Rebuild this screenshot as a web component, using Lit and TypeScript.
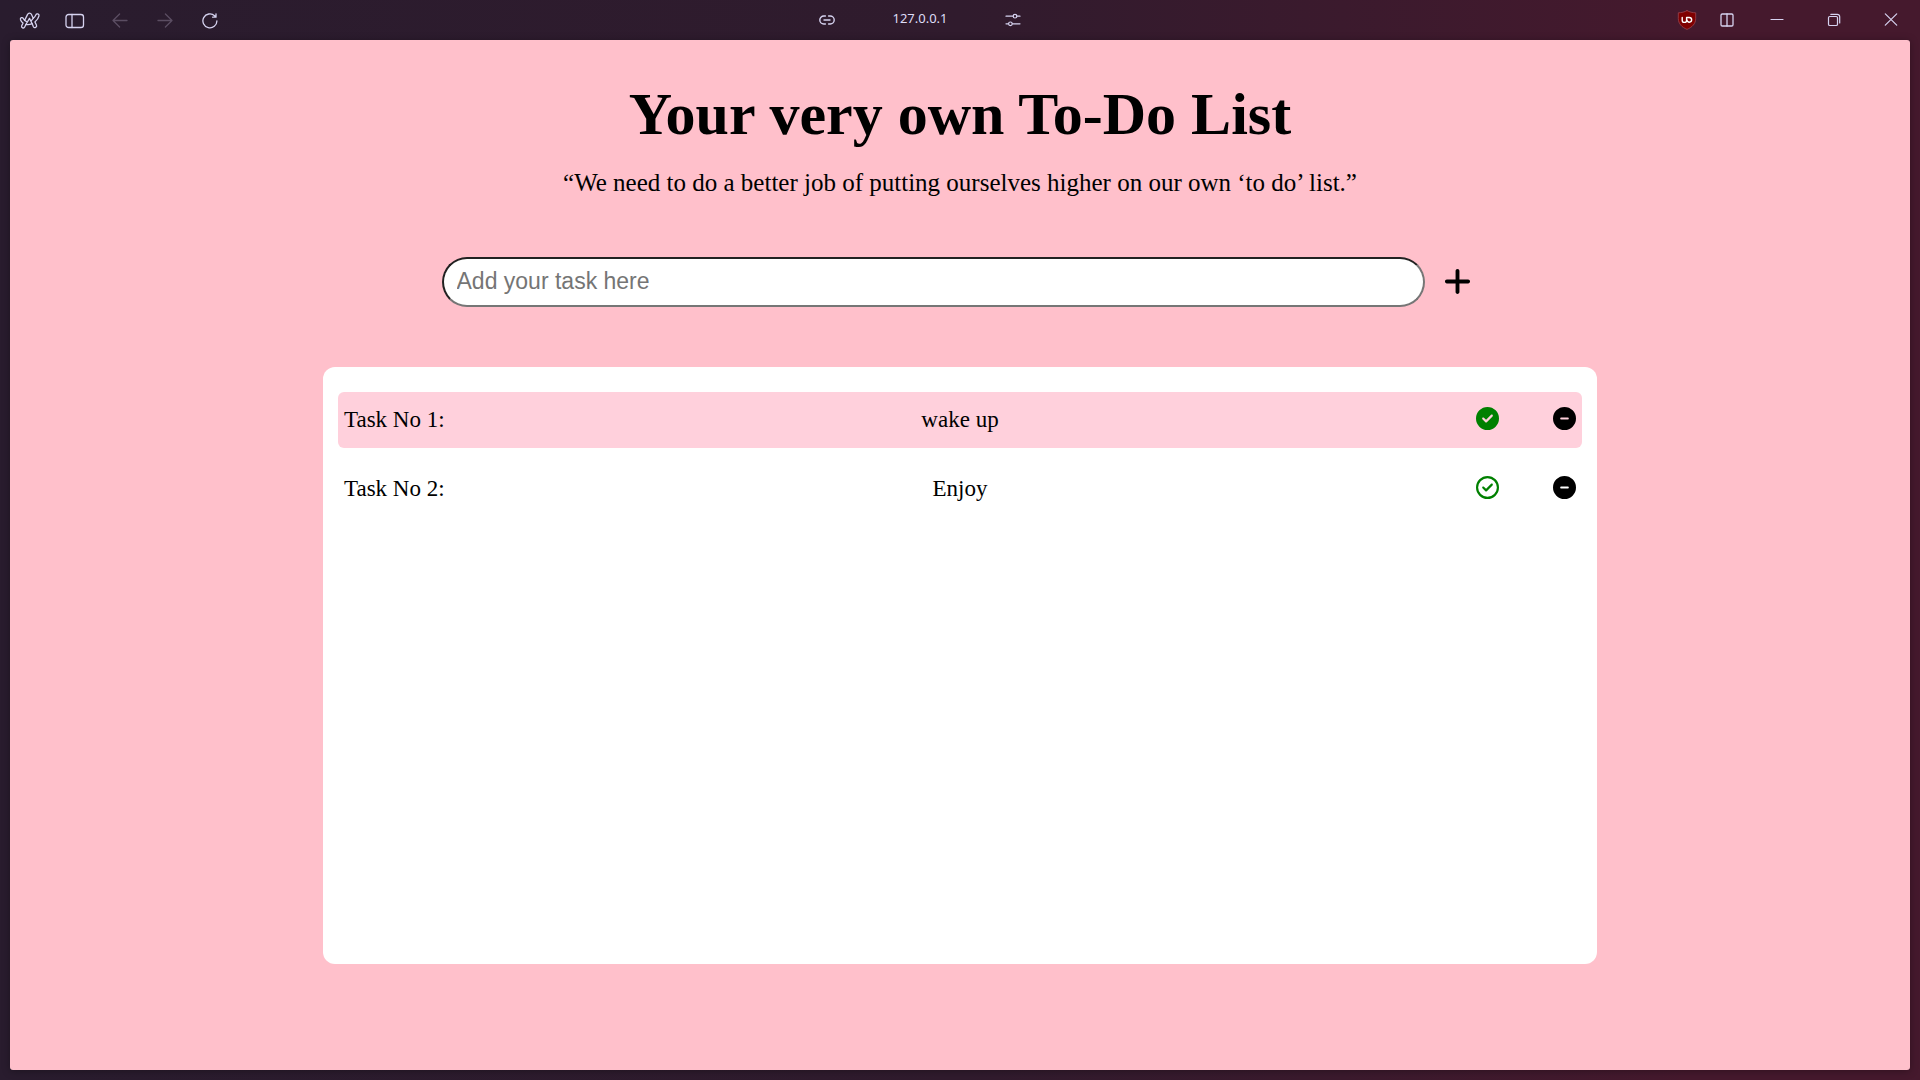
import { LitElement, html, css, svg } from "lit";
import { customElement, state } from "lit/decorators.js";
import { classMap } from "lit/directives/class-map.js";

interface Task {
  name: string;
  done: boolean;
}

const PLUS =
  "M256 80c0-17.7-14.3-32-32-32s-32 14.3-32 32V224H48c-17.7 0-32 14.3-32 32s14.3 32 32 32H192V432c0 17.7 14.3 32 32 32s32-14.3 32-32V288H400c17.7 0 32-14.3 32-32s-14.3-32-32-32H256V80z";
const CHECK_SOLID =
  "M256 512A256 256 0 1 0 256 0a256 256 0 1 0 0 512zM369 209L241 337c-9.4 9.4-24.6 9.4-33.9 0l-64-64c-9.4-9.4-9.4-24.6 0-33.9s24.6-9.4 33.9 0l47 47L335 175c9.4-9.4 24.6-9.4 33.9 0s9.4 24.6 0 33.9z";
const CHECK_OUTLINE =
  "M256 48a208 208 0 1 1 0 416 208 208 0 1 1 0-416zm0 464A256 256 0 1 0 256 0a256 256 0 1 0 0 512zM369 209c9.4-9.4 9.4-24.6 0-33.9s-24.6-9.4-33.9 0l-111 111-47-47c-9.4-9.4-24.6-9.4-33.9 0s-9.4 24.6 0 33.9l64 64c9.4 9.4 24.6 9.4 33.9 0L369 209z";
const MINUS =
  "M256 512A256 256 0 1 0 256 0a256 256 0 1 0 0 512zM184 232H328c13.3 0 24 10.7 24 24s-10.7 24-24 24H184c-13.3 0-24-10.7-24-24s10.7-24 24-24z";

@customElement("browser-bar")
export class BrowserBar extends LitElement {
  static styles = css`
    :host {
      display: block;
      color: #d6d3f0;
      font-family: "Noto Sans", "Open Sans", sans-serif;
    }
    * {
      box-sizing: border-box;
    }
    .bar {
      display: grid;
      grid-template-columns: 1fr auto 1fr;
      height: 40px;
    }
    .group {
      display: flex;
      align-items: center;
    }
    .nav {
      padding-left: 7px;
    }
    .address {
      margin-right: 80px;
      gap: 54px;
    }
    .window {
      justify-content: flex-end;
      padding-right: 1px;
    }
    button {
      display: flex;
      align-items: center;
      justify-content: center;
      padding: 0;
      border: 0;
      background: none;
      color: inherit;
      height: 40px;
    }
    .nav button {
      width: 45px;
      padding-top: 2px;
    }
    .nav button:disabled {
      color: #5b4d62;
    }
    .address button {
      width: 22px;
    }
    .window .extension {
      width: 38px;
    }
    .window .split {
      width: 42px;
    }
    .window .control {
      width: 57px;
    }
    .host {
      font-size: 13px;
      line-height: 36px;
      height: 40px;
      color: #dedcf6;
    }
    svg {
      display: block;
      fill: none;
      stroke: currentColor;
      stroke-linecap: round;
      stroke-linejoin: round;
    }
  `;

  render() {
    return html`
      <header class="bar">
        <nav class="group nav" aria-label="Navigation">
          <button aria-label="Menu">
            <svg width="22" height="20" viewBox="0 0 22 20" stroke="#e4e0e8" stroke-width="1.3">
              <path
                d="M8.6 3.4C9.3 1.6 11.6 1.6 12.4 3.3L14.2 7.3C15.6 6.2 16.4 5 16.8 3.9C17.6 2.1 20.4 2.9 20 4.9C19.5 7.2 17.9 9.3 15.9 10.9L17.5 14.2C18.3 16.2 15.4 17.6 14.4 15.7L13.2 12.7C10.9 13.7 8.8 13.9 6.9 13.5L5.7 16C4.8 17.9 1.9 16.7 2.7 14.7L4 12.1C2.9 11.2 2 10 1.5 8.7C.9 6.7 3.5 5.8 4.3 7.5C4.6 8.2 5.1 8.9 5.6 9.4Z"
              />
              <path d="M5.6 9.4L7.8 10.7M14.2 7.3L12.4 9.6M6.9 13.5L10.5 7.4L13.2 12.7" />
            </svg>
          </button>
          <button aria-label="Toggle sidebar">
            <svg width="20" height="16" viewBox="0 0 20 16" stroke-width="1.3">
              <rect x="1" y="1.5" width="17.5" height="13" rx="2.6" />
              <path d="M7 1.5v13" />
            </svg>
          </button>
          <button aria-label="Back" disabled>
            <svg width="16" height="16" viewBox="0 0 16 16" stroke-width="1.3">
              <path d="M15 7.5H1M7.6 1L1 7.5L7.6 14" />
            </svg>
          </button>
          <button aria-label="Forward" disabled>
            <svg width="16" height="16" viewBox="0 0 16 16" stroke-width="1.3">
              <path d="M1 7.5H15M8.4 1L15 7.5L8.4 14" />
            </svg>
          </button>
          <button aria-label="Reload">
            <svg width="16" height="16" viewBox="0 0 16 16" stroke-width="1.3">
              <path d="M14.9 7.8A7 7 0 1 1 12.6 2.7L13.8 4M14 .8V4.2H10.6" />
            </svg>
          </button>
        </nav>
        <div class="group address">
          <button aria-label="Copy link">
            <svg width="16" height="10" viewBox="0 0 16 10" stroke-width="1.4">
              <path d="M6.4 1H4.8a4 4 0 0 0 0 8h1.6M9.6 1h1.6a4 4 0 0 1 0 8H9.6M5 5h6" />
            </svg>
          </button>
          <span class="host">127.0.0.1</span>
          <button aria-label="Site settings">
            <svg width="16" height="14" viewBox="0 0 16 14" stroke-width="1.2">
              <path d="M1 3.2H8M12 3.2H15M1 10.8H3.4M7.4 10.8H15" />
              <circle cx="10" cy="3.2" r="1.8" />
              <circle cx="5.4" cy="10.8" r="1.8" />
            </svg>
          </button>
        </div>
        <div class="group window">
          <button class="extension" aria-label="uBlock">
            <svg width="20" height="20" viewBox="0 0 20 20">
              <path
                d="M10 .6C7.5 2.1 4.5 2.7 1.3 2.8V8.5C1.3 13.8 5 17.3 10 19.4C15 17.3 18.7 13.8 18.7 8.5V2.8C15.5 2.7 12.5 2.1 10 .6Z"
                fill="#800000"
                stroke="#9a4550"
                stroke-width=".8"
              />
              <path
                d="M5.2 7.4V10.2a2.2 2.2 0 0 0 4.4 0V7.4M9.6 10.2V7.5h2.7a2.3 2.3 0 0 1 0 4.7a2.3 2.3 0 0 1-2.3-2.3"
                stroke="#fff"
                stroke-width="1.4"
              />
            </svg>
          </button>
          <button class="split" aria-label="Split view">
            <svg width="14" height="14" viewBox="0 0 14 14" stroke="#f2eef6" stroke-width="1.3">
              <rect x="1" y="1" width="12" height="12" rx="1.3" />
              <path d="M7 1v12" />
            </svg>
          </button>
          <button class="control" aria-label="Minimize">
            <svg width="14" height="14" viewBox="0 0 14 14" stroke-width="1.2"><path d="M1 6.5h12" /></svg>
          </button>
          <button class="control" aria-label="Restore">
            <svg width="14" height="14" viewBox="0 0 14 14" stroke-width="1.2">
              <rect x="1.5" y="3.5" width="9" height="9" rx="1.3" />
              <path d="M3.8 1.3H10.3a2.4 2.4 0 0 1 2.4 2.4V10" />
            </svg>
          </button>
          <button class="control" aria-label="Close">
            <svg width="14" height="14" viewBox="0 0 14 14" stroke-width="1.2">
              <path d="M1.3 .8L12.7 12.2M12.7 .8L1.3 12.2" />
            </svg>
          </button>
        </div>
      </header>
    `;
  }
}

@customElement("app-root")
export class AppRoot extends LitElement {
  static styles = css`
    :host {
      display: flex;
      flex-direction: column;
      min-height: 100vh;
      background: linear-gradient(90deg, #291c2e 0%, #301b2d 50%, #45192d 88%);
      color: #000;
      font-family: "Liberation Serif", "Times New Roman", serif;
    }
    * {
      box-sizing: border-box;
    }
    .page {
      flex: 1;
      display: flex;
      flex-direction: column;
      align-items: center;
      margin: 0 10px 10px;
      padding: 40px 0 106px;
      border-radius: 3px;
      background: #ffc0cb;
      box-shadow: 0 1px 8px rgba(0, 0, 0, 0.3);
    }
    h1 {
      margin: 0;
      font-size: 60px;
      line-height: 68px;
    }
    .quote {
      margin: 20px 0 60px;
      font-size: 25px;
      line-height: 29px;
    }
    .entry {
      display: flex;
      align-items: center;
      gap: 13px;
      width: 55%;
      padding: 0 5px 0 4px;
      margin-bottom: 60px;
    }
    .entry input {
      flex: 1;
      min-width: 0;
      height: 50px;
      padding: 0 13px 2px;
      border: 2px solid;
      border-color: #212121 #767676 #767676 #212121;
      border-radius: 25px;
      background: #fff;
      font-family: "Liberation Sans", Arial, sans-serif;
      font-size: 23px;
    }
    .entry input::placeholder {
      color: #757575;
      opacity: 1;
    }
    button {
      display: flex;
      align-items: center;
      justify-content: center;
      padding: 0;
      border: 0;
      background: none;
      color: inherit;
      cursor: pointer;
    }
    .add {
      width: 40px;
      height: 50px;
      padding-bottom: 2px;
    }
    .icon {
      display: block;
      fill: currentColor;
    }
    .list {
      flex: 1;
      display: flex;
      flex-direction: column;
      gap: 13px;
      width: calc(67% + 1px);
      margin: 0;
      padding: 25px 15px;
      border-radius: 12px;
      background: #fff;
      list-style: none;
    }
    .task {
      display: grid;
      grid-template-columns: 1fr auto 1fr;
      align-items: center;
      height: 56px;
      padding: 0 6px;
      border-radius: 6px;
      font-size: 23px;
      line-height: 26px;
    }
    .task.done {
      background: #ffd0dc;
    }
    .actions {
      display: flex;
      justify-content: flex-end;
      gap: 54px;
      padding-bottom: 3px;
    }
    .check {
      color: #008000;
    }
  `;

  @state() private tasks: Task[] = [
    { name: "wake up", done: true },
    { name: "Enjoy", done: false },
  ];

  private icon(path: string, width: number, height: number, box = "0 0 512 512") {
    return html`<svg class="icon" width=${width} height=${height} viewBox=${box} aria-hidden="true">
      ${svg`<path d=${path} />`}
    </svg>`;
  }

  private add(event: Event) {
    event.preventDefault();
    const input = this.renderRoot.querySelector<HTMLInputElement>("#new-task")!;
    const name = input.value.trim();
    if (!name) return;
    this.tasks = [...this.tasks, { name, done: false }];
    input.value = "";
  }

  private toggle(task: Task) {
    this.tasks = this.tasks.map((t) => (t === task ? { ...t, done: !t.done } : t));
  }

  private remove(task: Task) {
    this.tasks = this.tasks.filter((t) => t !== task);
  }

  render() {
    return html`
      <browser-bar></browser-bar>
      <main class="page">
        <h1>Your very own To-Do List</h1>
        <p class="quote">“We need to do a better job of putting ourselves higher on our own ‘to do’ list.”</p>
        <form class="entry" @submit=${this.add}>
          <input id="new-task" type="text" aria-label="New task" placeholder="Add your task here" />
          <button class="add" type="submit" aria-label="Add task">${this.icon(PLUS, 27, 31, "0 0 448 512")}</button>
        </form>
        <ul class="list">
          ${this.tasks.map(
            (task, i) => html`
              <li class=${classMap({ task: true, done: task.done })}>
                <span>Task No ${i + 1}:</span>
                <span>${task.name}</span>
                <div class="actions">
                  <button
                    class="check"
                    aria-label="Mark as done"
                    aria-pressed=${task.done ? "true" : "false"}
                    @click=${() => this.toggle(task)}
                  >
                    ${this.icon(task.done ? CHECK_SOLID : CHECK_OUTLINE, 23, 23)}
                  </button>
                  <button aria-label="Remove task" @click=${() => this.remove(task)}>${this.icon(MINUS, 23, 23)}</button>
                </div>
              </li>
            `
          )}
        </ul>
      </main>
    `;
  }
}
